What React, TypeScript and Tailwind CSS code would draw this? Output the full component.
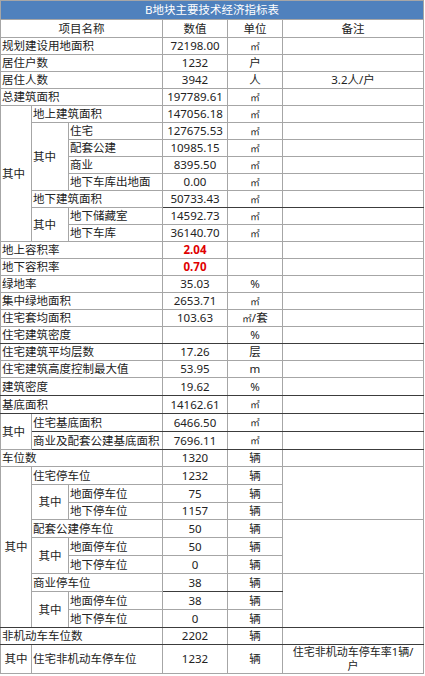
const line = "border border-[#a6a6a6]";
const dark = "border-b-[#3c3c3c]";

type TailProps = {
  v?: string;
  u?: React.ReactNode;
  note?: React.ReactNode;
  red?: boolean;
  dk?: boolean;
  noteRows?: number;
  skipNote?: boolean;
};

function Tail({ v = "", u = "", note = "", red, dk, noteRows, skipNote }: TailProps) {
  return (
    <>
      <td className={`${line} ${dk ? dark : ""} text-center ${red ? "font-bold text-[#e00000]" : ""}`}>{v}</td>
      <td className={`${line} ${dk ? dark : ""} text-center`}>{u}</td>
      {!skipNote && (
        <td rowSpan={noteRows} className={`${line} ${dk ? dark : ""} text-center`}>
          {note}
        </td>
      )}
    </>
  );
}

function Name({
  children,
  span = 1,
  rows,
  center,
  dk,
}: {
  children: React.ReactNode;
  span?: number;
  rows?: number;
  center?: boolean;
  dk?: boolean;
}) {
  return (
    <td
      colSpan={span}
      rowSpan={rows}
      className={`${line} ${dk ? dark : ""} ${center ? "text-center" : "pl-[1px] text-left"} whitespace-nowrap`}
    >
      {children}
    </td>
  );
}

// simple rows whose name spans the three left columns
function Simple({ h, name, dk, ...t }: TailProps & { h: string; name: string }) {
  return (
    <tr className={h}>
      <Name span={3} dk={dk}>
        {name}
      </Name>
      <Tail dk={dk} {...t} />
    </tr>
  );
}

const M2 = <span className="text-[9.5px]">㎡</span>;

export default function App() {
  return (
    <div
      className="w-[425px] bg-white text-[11.5px] leading-[14px] text-[#222]"
      style={{ fontFamily: '"Noto Sans", "Noto Sans CJK SC", sans-serif' }}
    >
      <table className="w-[423px] table-fixed border-collapse">
        <colgroup>
          <col className="w-[31px]" />
          <col className="w-[37px]" />
          <col className="w-[94px]" />
          <col className="w-[65px]" />
          <col className="w-[55px]" />
          <col className="w-[141px]" />
        </colgroup>
        <tbody>
          <tr className="h-[19px]">
            <td colSpan={6} className="border border-[#a6a6a6] bg-[#4f81bd] text-center text-white">
              B地块主要技术经济指标表
            </td>
          </tr>
          <tr className="h-[18px]">
            <td colSpan={3} className={`${line} text-center`}>项目名称</td>
            <td className={`${line} text-center`}>数值</td>
            <td className={`${line} text-center`}>单位</td>
            <td className={`${line} text-center`}>备注</td>
          </tr>
          <Simple h="h-[17px]" name="规划建设用地面积" v="72198.00" u={M2} />
          <Simple h="h-[17px]" name="居住户数" v="1232" u="户" />
          <Simple h="h-[17px]" name="居住人数" v="3942" u="人" note="3.2人/户" />
          <Simple h="h-[17px]" name="总建筑面积" v="197789.61" u={M2} />

          <tr className="h-[17px]">
            <td rowSpan={8} className={`${line} pl-[1px] text-left`}>其中</td>
            <Name span={2}>地上建筑面积</Name>
            <Tail v="147056.18" u={M2} />
          </tr>
          <tr className="h-[17px]">
            <Name rows={4}>其中</Name>
            <Name>住宅</Name>
            <Tail v="127675.53" u={M2} />
          </tr>
          <tr className="h-[17px]">
            <Name>配套公建</Name>
            <Tail v="10985.15" u={M2} />
          </tr>
          <tr className="h-[17px]">
            <Name>商业</Name>
            <Tail v="8395.50" u={M2} />
          </tr>
          <tr className="h-[17px]">
            <Name>地下车库出地面</Name>
            <Tail v="0.00" u={M2} />
          </tr>
          <tr className="h-[17px]">
            <Name span={2}>地下建筑面积</Name>
            <Tail v="50733.43" u={M2} dk />
          </tr>
          <tr className="h-[17px]">
            <Name rows={2}>其中</Name>
            <Name>地下储藏室</Name>
            <Tail v="14592.73" u={M2} />
          </tr>
          <tr className="h-[17px]">
            <Name>地下车库</Name>
            <Tail v="36140.70" u={M2} />
          </tr>

          <Simple h="h-[17px]" name="地上容积率" v="2.04" red />
          <Simple h="h-[17px]" name="地下容积率" v="0.70" red />
          <Simple h="h-[17px]" name="绿地率" v="35.03" u="%" />
          <Simple h="h-[17px]" name="集中绿地面积" v="2653.71" u={M2} />
          <Simple h="h-[17px]" name="住宅套均面积" v="103.63" u={<>{M2}/套</>} />
          <Simple h="h-[17px]" name="住宅建筑密度" u="%" dk />
          <Simple h="h-[17px]" name="住宅建筑平均层数" v="17.26" u="层" />
          <Simple h="h-[17px]" name="住宅建筑高度控制最大值" v="53.95" u="m" />
          <Simple h="h-[18px]" name="建筑密度" v="19.62" u="%" dk />
          <Simple h="h-[18px]" name="基底面积" v="14162.61" u={M2} dk />

          <tr className="h-[18px]">
            <Name rows={2}>其中</Name>
            <Name span={2} dk>住宅基底面积</Name>
            <Tail v="6466.50" u={M2} dk />
          </tr>
          <tr className="h-[18px]">
            <Name span={2} dk>商业及配套公建基底面积</Name>
            <Tail v="7696.11" u={M2} dk />
          </tr>
          <Simple h="h-[17px]" name="车位数" v="1320" u="辆" />

          <tr className="h-[18px]">
            <td rowSpan={9} className={`${line} ${dark} text-center`}>其中</td>
            <Name span={2}>住宅停车位</Name>
            <Tail v="1232" u="辆" noteRows={3} />
          </tr>
          <tr className="h-[18px]">
            <Name rows={2} center>其中</Name>
            <Name>地面停车位</Name>
            <Tail v="75" u="辆" skipNote />
          </tr>
          <tr className="h-[17px]">
            <Name>地下停车位</Name>
            <Tail v="1157" u="辆" skipNote />
          </tr>
          <tr className="h-[18px]">
            <Name span={2}>配套公建停车位</Name>
            <Tail v="50" u="辆" noteRows={3} />
          </tr>
          <tr className="h-[18px]">
            <Name rows={2} center>其中</Name>
            <Name>地面停车位</Name>
            <Tail v="50" u="辆" skipNote />
          </tr>
          <tr className="h-[18px]">
            <Name>地下停车位</Name>
            <Tail v="0" u="辆" skipNote />
          </tr>
          <tr className="h-[18px]">
            <Name span={2}>商业停车位</Name>
            <Tail v="38" u="辆" noteRows={3} dk />
          </tr>
          <tr className="h-[18px]">
            <Name rows={2} center dk>其中</Name>
            <Name>地面停车位</Name>
            <Tail v="38" u="辆" skipNote />
          </tr>
          <tr className="h-[18px]">
            <Name dk>地下停车位</Name>
            <Tail v="0" u="辆" skipNote dk />
          </tr>
          <Simple h="h-[17px]" name="非机动车车位数" v="2202" u="辆" dk />
          <tr className="h-[29px]">
            <Name center>其中</Name>
            <Name span={2}>住宅非机动车停车位</Name>
            <Tail
              v="1232"
              u="辆"
              note={
                <span className="block text-[11px] leading-[14px]">
                  住宅非机动车停车率1辆/
                  <br />户
                </span>
              }
            />
          </tr>
        </tbody>
      </table>
    </div>
  );
}
